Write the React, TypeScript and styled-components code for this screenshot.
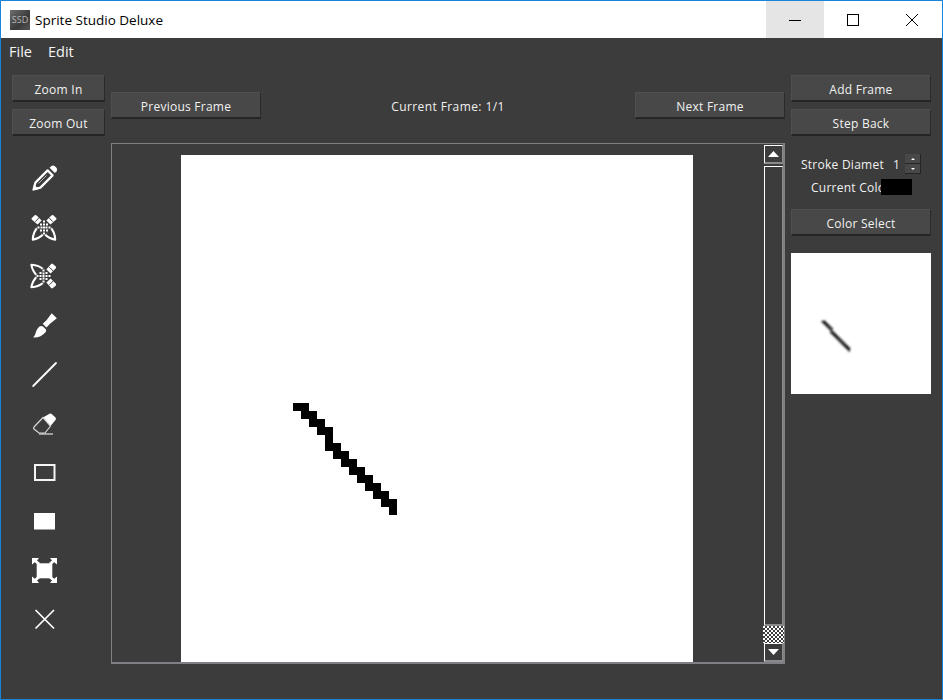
import React from 'react';
import styled, { createGlobalStyle } from 'styled-components';

const GlobalStyle = createGlobalStyle`
    html, body {
        margin: 0;
        padding: 0;
        background: #3c3c3c;
    }
`;

const Window = styled.div`
    box-sizing: border-box;
    width: 943px;
    height: 700px;
    border: 1px solid #1883d7;
    background: #3c3c3c;
    color: #f1f1f1;
    font-family: "Open Sans", "Noto Sans", sans-serif;
    font-size: 12px;
    letter-spacing: 0.25px;
    overflow: hidden;
`;

const TitleBar = styled.div`
    display: flex;
    align-items: center;
    height: 37px;
    background: #ffffff;
    color: #000000;
    letter-spacing: 0;
`;

const AppLogo = styled.div`
    width: 20px;
    height: 20px;
    margin-left: 9px;
    background: linear-gradient(135deg, #6e6e6e, #3a3a3a 60%, #555555);
    color: #b9b9b9;
    font-size: 9px;
    line-height: 20px;
    text-align: center;
    overflow: hidden;
`;

const AppTitle = styled.div`
    flex: 1;
    margin-left: 5px;
    font-size: 13.5px;
`;

const WindowButton = styled.div<{ $hover?: boolean }>`
    display: flex;
    align-items: center;
    justify-content: center;
    width: 58px;
    height: 37px;
    background: ${(p) => (p.$hover ? '#e5e5e5' : 'transparent')};

    &:last-child {
        width: 60px;
    }
`;

const MenuBar = styled.div`
    display: flex;
    gap: 16px;
    height: 27px;
    padding-left: 8px;
    align-items: center;
    font-size: 14.5px;
    letter-spacing: 0;
    color: #f4f4f4;
`;

const Main = styled.div`
    display: grid;
    grid-template-columns: 93px 674px 140px;
    grid-template-rows: 61px 521px;
    column-gap: 6px;
    row-gap: 7px;
    padding: 10px 0 0 11px;
`;

const ButtonStack = styled.div`
    display: flex;
    flex-direction: column;
    gap: 7px;
`;

const ActionButton = styled.button<{ $wide?: boolean }>`
    box-sizing: border-box;
    display: block;
    width: ${(p) => (p.$wide ? '150px' : '100%')};
    height: 27px;
    padding: 2px 0 0;
    background: #484848;
    border: 1px solid #4f4f4f;
    border-right-color: #2a2a2a;
    border-bottom: 2px solid #252525;
    color: #f1f1f1;
    font-family: inherit;
    font-size: 12px;
    letter-spacing: inherit;
`;

const FrameBar = styled.div`
    display: flex;
    align-items: center;
    justify-content: space-between;
`;

const FrameLabel = styled.div`
    flex: 1;
    text-align: center;
    letter-spacing: 0.4px;
    padding-top: 1px;
`;

const ToolColumn = styled.div`
    display: flex;
    flex-direction: column;
    align-items: flex-start;
    gap: 21px;
    padding: 21px 0 0 18px;
`;

const ToolIcon = styled.svg`
    display: block;
    width: 28px;
    height: 28px;
`;

const CanvasFrame = styled.div`
    box-sizing: border-box;
    display: flex;
    height: 521px;
    border-left: 1px solid #7f7f86;
    border-top: 1px solid #7f7f86;
    border-bottom: 2px solid #7f7f86;
    border-right: 2px solid #7f7f86;
`;

const Viewport = styled.div`
    flex: 1;
    display: flex;
    justify-content: center;
    padding-top: 11px;
    overflow: hidden;
`;

const Paper = styled.svg`
    display: block;
    flex: none;
    width: 512px;
    height: 512px;
    background: #ffffff;
`;

const ScrollBar = styled.div`
    box-sizing: border-box;
    display: flex;
    flex-direction: column;
    width: 21px;
    padding-top: 1px;
`;

const ScrollArrow = styled.div`
    box-sizing: border-box;
    display: flex;
    align-items: center;
    justify-content: center;
    flex: none;
    height: 19px;
    margin-left: 2px;
    border: 1px solid #ffffff;
    border-right-color: #8a8a8a;
    border-bottom-color: #8a8a8a;
    border-bottom-width: 2px;
`;

const ScrollTrack = styled.div`
    box-sizing: border-box;
    flex: 1;
    margin: 2px 0 0 2px;
    border-left: 1px solid #ffffff;
    border-top: 1px solid #ffffff;
    border-right: 1px solid #8a8a8a;
    border-bottom: 2px solid #8a8a8a;
`;

const ScrollHandle = styled.div`
    flex: none;
    height: 17px;
    margin: 0 -1px 0 1px;
    background: repeating-conic-gradient(#3c3c3c 0 25%, #ffffff 0 50%) 0 0 / 4px 4px;
`;

const SidePanel = styled.div`
    display: flex;
    flex-direction: column;
`;

const StrokeRow = styled.div`
    display: flex;
    align-items: center;
    height: 22px;
    margin-top: 10px;
    padding-left: 10px;
`;

const ClippedLabel = styled.div<{ $width: number }>`
    flex: none;
    width: ${(p) => p.$width}px;
    overflow: hidden;
    white-space: nowrap;
`;

const StrokeValue = styled.div`
    width: 21px;
    padding-left: 9px;
    box-sizing: border-box;
`;

const Spinner = styled.div`
    display: flex;
    flex-direction: column;
    width: 16px;
`;

const SpinButton = styled.div`
    box-sizing: border-box;
    display: flex;
    align-items: center;
    justify-content: center;
    height: 10px;
    background: #484848;
    border-bottom: 1px solid #252525;
    border-right: 1px solid #252525;
`;

const ColorRow = styled.div`
    display: flex;
    align-items: center;
    height: 16px;
    margin-top: 4px;
    padding-left: 20px;
`;

const Swatch = styled.div`
    width: 31px;
    height: 16px;
    background: #000000;
`;

const PanelAction = styled.div`
    margin-top: 14px;
`;

const Preview = styled.svg`
    display: block;
    width: 140px;
    height: 141px;
    margin-top: 17px;
    background: #ffffff;
`;

// pixel runs of the drawn stroke, as [x, y, width, height] on the 512 canvas
const strokeRuns = [
    [112, 248, 16, 8], [120, 256, 16, 8], [128, 264, 16, 8], [136, 272, 16, 8],
    [144, 280, 8, 8], [144, 288, 16, 8], [152, 296, 16, 8], [160, 304, 16, 8],
    [168, 312, 16, 8], [176, 320, 16, 8], [184, 328, 16, 8], [192, 336, 16, 8],
    [200, 344, 16, 8], [208, 352, 8, 8],
];

const StrokeCells = () => (
    <>
        {strokeRuns.map(([x, y, w, h]) => (
            <rect key={`${x}-${y}`} x={x} y={y} width={w} height={h} fill="#000" />
        ))}
    </>
);

const PencilShape = () => (
    <>
        <path d="M3.6 25.4 L5.4 18.6 L17.6 6.4 L22.6 11.4 L10.4 23.6 Z" fill="none" stroke="#fff" strokeWidth="2.2" strokeLinejoin="round" />
        <path d="M2.6 26.4 L4 20.5 L8.6 25 Z" fill="#fff" />
        <path d="M8.5 19.5 L16.5 11.5" stroke="#fff" strokeWidth="1" opacity="0.6" />
        <path d="M19.6 3.8 L21.4 2 Q23 1 24.6 2 L26.6 4 Q27.6 5.6 26.6 7.2 L24.8 9 Z" fill="#fff" />
    </>
);

const dots = [[14, 8.5], [11, 11.5], [14, 11.5], [17, 11.5], [8.5, 14.5], [11.5, 14.5], [14, 14.5], [16.5, 14.5], [19.5, 14.5], [11, 17.5], [14, 17.5], [17, 17.5], [14, 20.5]];

const CrossedPencils = () => (
    <>
        <path d="M2.8 26.6 Q3 19 8 14 L13.5 21 Q9 25.6 2.8 26.6 Z" fill="none" stroke="#fff" strokeWidth="2.1" strokeLinejoin="round" />
        <path d="M25.2 26.6 Q25 19 20 14 L14.5 21 Q19 25.6 25.2 26.6 Z" fill="none" stroke="#fff" strokeWidth="2.1" strokeLinejoin="round" />
        <path d="M14 6 L22 14.5 L14 23 L6 14.5 Z" fill="#3c3c3c" />
        {dots.map(([x, y]) => (
            <rect key={`${x}-${y}`} x={x - 1} y={y - 1} width="2" height="2" fill="#fff" />
        ))}
        <path d="M1.4 5.6 L4.6 2.2 Q5.6 1.6 6.6 2.4 L11.6 7.4 L7.6 11.6 L2 6.8 Z" fill="#fff" />
        <path d="M26.6 5.6 L23.4 2.2 Q22.4 1.6 21.4 2.4 L16.4 7.4 L20.4 11.6 L26 6.8 Z" fill="#fff" />
        <path d="M5.2 8.6 L9 4.8 M22.8 8.6 L19 4.8" stroke="#3c3c3c" strokeWidth="1" />
    </>
);

const tools = [
    <PencilShape key="pencil" />,
    <CrossedPencils key="mirror-v" />,
    <g key="mirror-h" transform="rotate(90 14 14)"><CrossedPencils /></g>,
    <g key="brush" fill="#fff">
        <path d="M2.7 26.3 C6 25.5 5 19 9.5 15.5 C10.5 14.7 12 14.7 13 15.5 L15.5 18 C16.5 19 16.3 20.2 15.5 21.2 C12 25.5 7 27 2.7 26.3 Z" />
        <path d="M12.7 12.8 L16.5 9.2 L21.7 2.3 L26.9 7.3 L20 12.7 L16.5 16.5 Z" />
    </g>,
    <path key="line" d="M3.2 26 L26 3" stroke="#fff" strokeWidth="1.8" strokeLinecap="round" />,
    <g key="eraser">
        <path d="M13 8.5 L19.5 4.8 Q20.7 4 21.7 5 L25.5 8.5 Q26.5 9.7 25.5 11 L20.5 17 Z" fill="#fff" />
        <path d="M13 8.5 L4 18 Q3 19 4 20 L9 24 L15 24 L20.5 17 Z" fill="none" stroke="#d8d8d8" strokeWidth="1.2" />
        <path d="M9 25 L23 25" stroke="#fff" strokeWidth="1" />
    </g>,
    <rect key="outline" x="5" y="7" width="19.5" height="15" fill="none" stroke="#f4f4f4" strokeWidth="2" />,
    <rect key="solid" x="4" y="6" width="21" height="16.5" fill="#fff" />,
    <g key="fit" fill="#fff" transform="translate(0 2)">
        <rect x="6.7" y="5.3" width="15.6" height="15" />
        <path d="M2 0 L9 0 L7 2.4 L10 5 L8 7 L4.8 4.2 L2 6.5 Z" />
        <path d="M27 0 L20 0 L22 2.4 L19 5 L21 7 L24.2 4.2 L27 6.5 Z" />
        <path d="M2 25 L9 25 L7 22.6 L10 20 L8 18 L4.8 20.8 L2 18.5 Z" />
        <path d="M27 25 L20 25 L22 22.6 L19 20 L21 18 L24.2 20.8 L27 18.5 Z" />
    </g>,
    <path key="clear" d="M5.5 5 L24 23.5 M24 5 L5.5 23.5" stroke="#fff" strokeWidth="1.7" />,
];

const App: React.FC = () => {
    return (
        <Window>
            <GlobalStyle />
            <TitleBar>
                <AppLogo>SSD</AppLogo>
                <AppTitle>Sprite Studio Deluxe</AppTitle>
                <WindowButton $hover>
                    <svg width="12" height="12" viewBox="0 0 12 12"><path d="M0 6.5 H12" stroke="#000" /></svg>
                </WindowButton>
                <WindowButton>
                    <svg width="12" height="12" viewBox="0 0 12 12"><rect x="0.5" y="0.5" width="11" height="11" fill="none" stroke="#000" /></svg>
                </WindowButton>
                <WindowButton>
                    <svg width="12" height="12" viewBox="0 0 12 12"><path d="M0 0 L12 12 M12 0 L0 12" stroke="#000" /></svg>
                </WindowButton>
            </TitleBar>
            <MenuBar>
                <span>File</span>
                <span>Edit</span>
            </MenuBar>
            <Main>
                <ButtonStack>
                    <ActionButton>Zoom In</ActionButton>
                    <ActionButton>Zoom Out</ActionButton>
                </ButtonStack>
                <FrameBar>
                    <ActionButton $wide>Previous Frame</ActionButton>
                    <FrameLabel>Current Frame: 1/1</FrameLabel>
                    <ActionButton $wide>Next Frame</ActionButton>
                </FrameBar>
                <ButtonStack>
                    <ActionButton>Add Frame</ActionButton>
                    <ActionButton>Step Back</ActionButton>
                </ButtonStack>
                <ToolColumn>
                    {tools.map((icon, i) => (
                        <ToolIcon key={i} viewBox="0 0 28 28">{icon}</ToolIcon>
                    ))}
                </ToolColumn>
                <CanvasFrame>
                    <Viewport>
                        <Paper viewBox="0 0 512 512" shapeRendering="crispEdges">
                            <StrokeCells />
                        </Paper>
                    </Viewport>
                    <ScrollBar>
                        <ScrollArrow>
                            <svg width="11" height="6" viewBox="0 0 11 6"><path d="M5.5 0 L11 6 H0 Z" fill="#fff" /></svg>
                        </ScrollArrow>
                        <ScrollTrack />
                        <ScrollHandle />
                        <ScrollArrow>
                            <svg width="11" height="6" viewBox="0 0 11 6"><path d="M0 0 H11 L5.5 6 Z" fill="#fff" /></svg>
                        </ScrollArrow>
                    </ScrollBar>
                </CanvasFrame>
                <SidePanel>
                    <StrokeRow>
                        <ClippedLabel $width={83}>Stroke Diamet</ClippedLabel>
                        <StrokeValue>1</StrokeValue>
                        <Spinner>
                            <SpinButton>
                                <svg width="4" height="2" viewBox="0 0 4 2"><path d="M2 0 L4 2 H0 Z" fill="#fff" /></svg>
                            </SpinButton>
                            <SpinButton>
                                <svg width="4" height="2" viewBox="0 0 4 2"><path d="M0 0 H4 L2 2 Z" fill="#fff" /></svg>
                            </SpinButton>
                        </Spinner>
                    </StrokeRow>
                    <ColorRow>
                        <ClippedLabel $width={70}>Current Colo</ClippedLabel>
                        <Swatch />
                    </ColorRow>
                    <PanelAction>
                        <ActionButton>Color Select</ActionButton>
                    </PanelAction>
                    <Preview viewBox="0 0 512 516">
                        <defs>
                            <filter id="soft"><feGaussianBlur stdDeviation="3" /></filter>
                        </defs>
                        <g filter="url(#soft)"><StrokeCells /></g>
                    </Preview>
                </SidePanel>
            </Main>
        </Window>
    );
};

export default App;
